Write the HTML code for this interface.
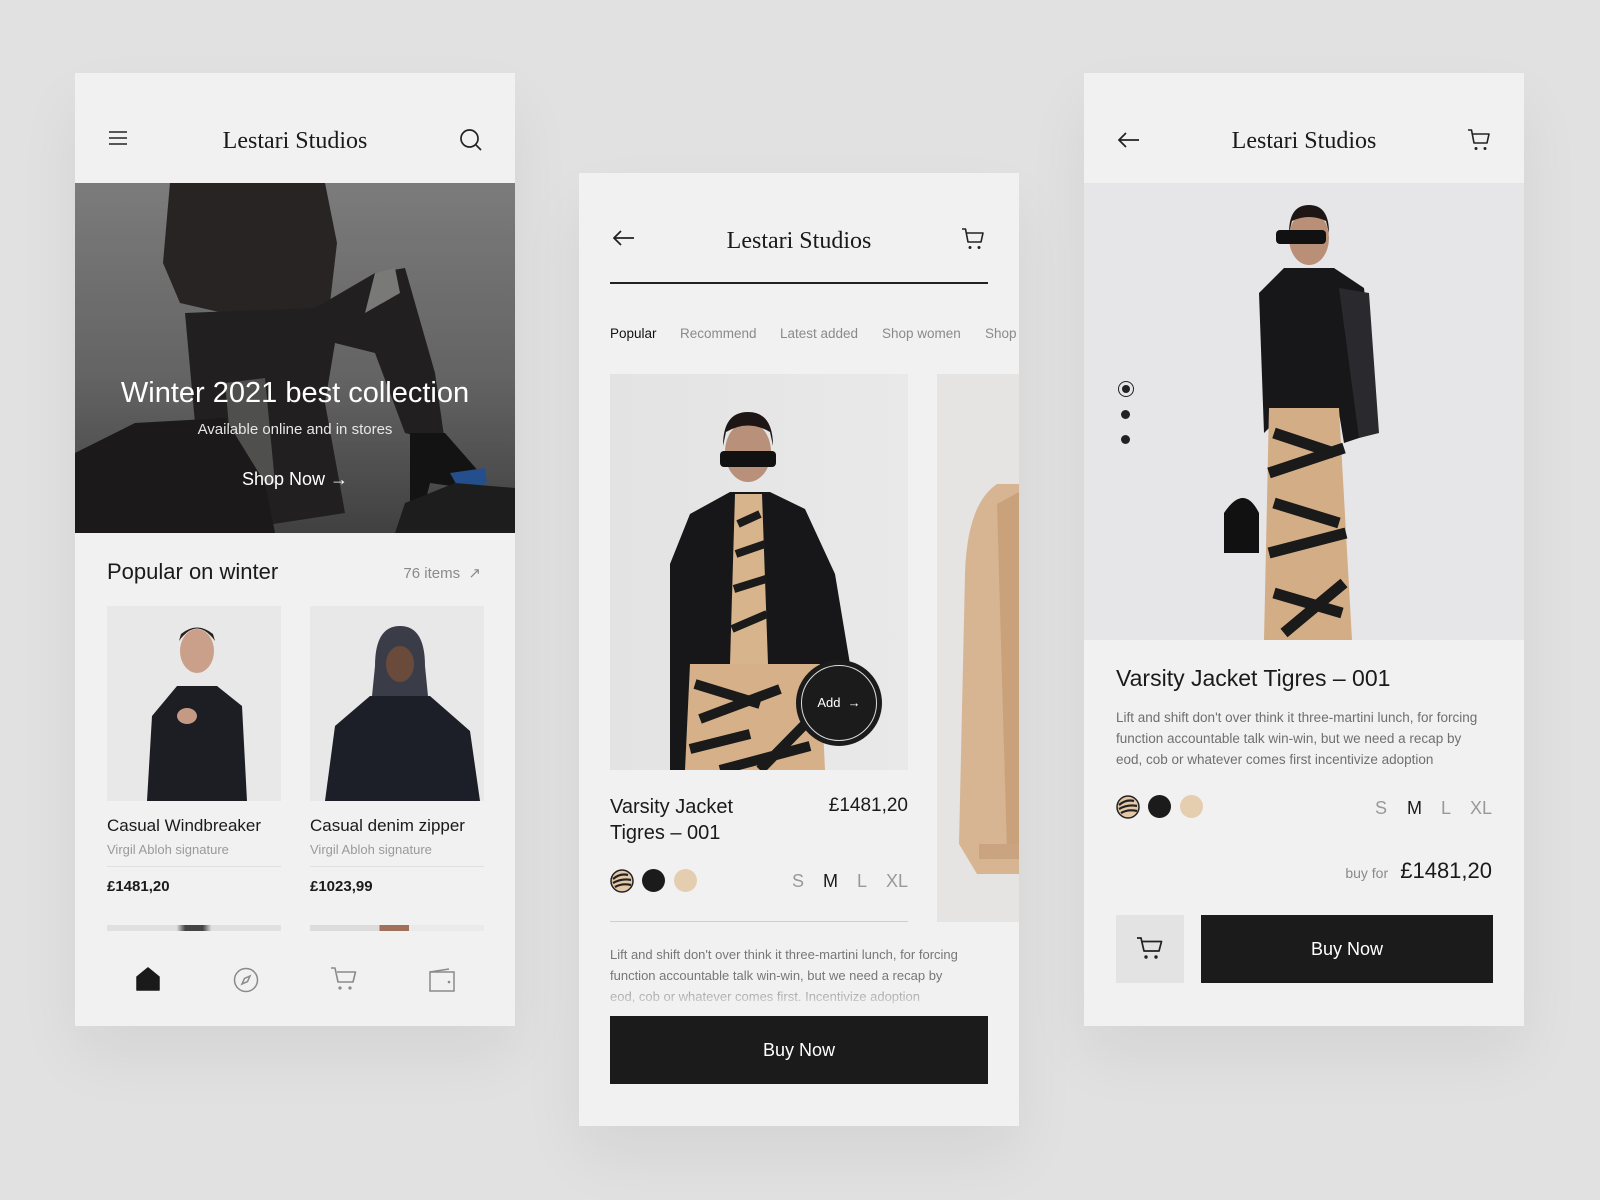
<!DOCTYPE html>
<html><head><meta charset="utf-8"><style>
*{margin:0;padding:0;box-sizing:border-box}
body{width:1600px;height:1200px;background:#e1e1e1;font-family:"Liberation Sans",sans-serif;position:relative;overflow:hidden;color:#1a1a1a}
.card{position:absolute;width:440px;height:953px;background:#f1f1f1;box-shadow:0 30px 60px rgba(0,0,0,0.06);overflow:hidden}
.a{position:absolute;white-space:nowrap}
.logo{font-family:"Liberation Serif",serif;font-size:24px;line-height:28px;color:#1a1a1a}
.gray{color:#8a8a8a}
.sw{position:absolute;width:23px;height:23px;border-radius:50%}
.btn{position:absolute;background:#1b1b1b;color:#fff;font-size:18px;display:flex;align-items:center;justify-content:center}
</style></head><body>

<!-- LEFT CARD -->
<div class="card" style="left:75px;top:73px;">
  <svg class="a" style="left:33px;top:57px" width="20" height="16" viewBox="0 0 20 16"><path d="M1 2h18M1 8h18M1 14h18" stroke="#222" stroke-width="1.6"/></svg>
  <div class="a logo" style="left:0;width:440px;text-align:center;top:54px">Lestari Studios</div>
  <svg class="a" style="left:384px;top:55px" width="24" height="24" viewBox="0 0 24 24"><circle cx="10.5" cy="10.5" r="8.5" fill="none" stroke="#222" stroke-width="1.7"/><path d="M17 17l5 5" stroke="#222" stroke-width="1.7"/></svg>
  <div class="a" style="left:0;top:110px;width:440px;height:350px;overflow:hidden;background:linear-gradient(180deg,#8d8d8d 0%,#727272 55%,#4a4a4a 100%)">
    <svg width="440" height="350" viewBox="0 0 440 350">
      <path d="M95 0 L250 0 L262 60 L255 120 L230 135 L170 135 L105 120 L88 80 Z" fill="#2e2a28"/>
      <path d="M110 130 L240 125 L300 90 L330 85 L360 190 L370 260 L330 250 L300 170 L260 160 L250 220 L270 330 L140 350 L120 240 Z" fill="#262424"/>
      <path d="M300 90 L320 85 L325 110 L290 130 Z" fill="#8a8a88"/>
      <path d="M150 200 L190 195 L200 300 L160 310 Z" fill="#5a5a58"/>
      <path d="M0 270 L60 240 L150 235 L190 300 L200 350 L0 350 Z" fill="#1f1d1d"/>
      <path d="M335 250 L370 250 L405 290 L390 305 L355 300 L345 340 L335 340 Z" fill="#161616"/>
      <path d="M375 290 L410 285 L412 300 L385 308 Z" fill="#2a5aa0"/>
      <path d="M330 320 L380 300 L440 305 L440 350 L320 350 Z" fill="#222"/>
      <rect width="440" height="350" fill="rgba(0,0,0,0.12)"/>
    </svg>
    <div class="a" style="left:0;width:440px;text-align:center;top:193px;color:#fff;font-size:29px;line-height:34px">Winter 2021 best collection</div>
    <div class="a" style="left:0;width:440px;text-align:center;top:238px;color:#e6e6e6;font-size:15px;line-height:18px">Available online and in stores</div>
    <div class="a" style="left:0;width:440px;text-align:center;top:285px;color:#fff;font-size:18px;line-height:22px">Shop Now &rarr;</div>
  </div>
  <div class="a" style="left:32px;top:486px;font-size:22px;line-height:26px">Popular on winter</div>
  <div class="a gray" style="right:34px;top:492px;font-size:15px;line-height:18px">76 items &nbsp;&#8599;</div>
  <div class="a" style="left:32px;top:533px;width:174px;height:195px;background:#e9e8e8;overflow:hidden">
    <svg width="174" height="195" viewBox="0 0 174 195"><ellipse cx="90" cy="45" rx="17" ry="22" fill="#caa08a"/><path d="M72 35 Q90 10 108 35 L106 28 Q90 15 74 28Z" fill="#2a201c"/><path d="M40 195 L45 110 L70 80 L110 80 L135 100 L140 195 Z" fill="#1d1e24"/><ellipse cx="80" cy="110" rx="10" ry="8" fill="#c49a85"/></svg>
  </div>
  <div class="a" style="left:235px;top:533px;width:174px;height:195px;background:#e9e8e8;overflow:hidden">
    <svg width="174" height="195" viewBox="0 0 174 195"><path d="M65 60 Q65 20 90 20 Q115 20 115 60 L118 90 L62 90Z" fill="#3a3d48"/><ellipse cx="90" cy="58" rx="14" ry="18" fill="#6a4a3a"/><path d="M15 195 L25 120 L60 90 L120 90 L160 125 L170 195 Z" fill="#1d1f28"/></svg>
  </div>
  <div class="a" style="left:32px;top:743px;font-size:17px;line-height:20px">Casual Windbreaker</div>
  <div class="a" style="left:235px;top:743px;font-size:17px;line-height:20px">Casual denim zipper</div>
  <div class="a gray" style="left:32px;top:769px;font-size:13px;line-height:16px;color:#9a9a9a">Virgil Abloh signature</div>
  <div class="a gray" style="left:235px;top:769px;font-size:13px;line-height:16px;color:#9a9a9a">Virgil Abloh signature</div>
  <div class="a" style="left:32px;top:793px;width:174px;height:1px;background:#e0e0e0"></div>
  <div class="a" style="left:235px;top:793px;width:174px;height:1px;background:#e0e0e0"></div>
  <div class="a" style="left:32px;top:805px;font-size:15px;line-height:18px;font-weight:bold">£1481,20</div>
  <div class="a" style="left:235px;top:805px;font-size:15px;line-height:18px;font-weight:bold">£1023,99</div>
  <div class="a" style="left:32px;top:852px;width:174px;height:6px;background:linear-gradient(90deg,#e0e0e0 0 40%,#444 45% 55%,#e0e0e0 60%)"></div>
  <div class="a" style="left:235px;top:852px;width:174px;height:6px;background:linear-gradient(90deg,#dcdcdc 0 40%,#a0705a 40% 57%,#eaeaea 57%)"></div>
  <div class="a" style="left:0;top:860px;width:440px;height:93px;background:#f1f1f1"></div>
  <svg class="a" style="left:61px;top:894px" width="24" height="24" viewBox="0 0 24 24"><path d="M1 10 L12 1 L23 10 L23 23 L1 23 Z" fill="#1a1a1a" stroke="#1a1a1a" stroke-linejoin="round" stroke-width="1.5"/></svg>
  <svg class="a" style="left:158px;top:894px" width="26" height="26" viewBox="0 0 26 26"><circle cx="13" cy="13" r="11.5" fill="none" stroke="#8a8a8a" stroke-width="1.5"/><path d="M17 9 L14.5 14.5 L9 17 L11.5 11.5 Z" fill="none" stroke="#8a8a8a" stroke-width="1.5"/></svg>
  <svg class="a" style="left:255px;top:893px" width="28" height="26" viewBox="0 0 28 26"><path d="M1 2h4l3 14h15l2.5-10H7" fill="none" stroke="#8a8a8a" stroke-width="1.6" stroke-linejoin="round"/><circle cx="10" cy="22" r="1.6" fill="#8a8a8a"/><circle cx="20" cy="22" r="1.6" fill="#8a8a8a"/></svg>
  <svg class="a" style="left:354px;top:895px" width="26" height="24" viewBox="0 0 26 24"><rect x="1" y="4" width="24" height="19" fill="none" stroke="#8a8a8a" stroke-width="1.5"/><path d="M1 4 L20 1" stroke="#8a8a8a" stroke-width="1.5"/><circle cx="20" cy="14" r="1.3" fill="#8a8a8a"/></svg>
</div>

<!-- MIDDLE CARD -->
<div class="card" style="left:579px;top:173px;">
  <svg class="a" style="left:34px;top:57px" width="22" height="16" viewBox="0 0 22 16"><path d="M21 8H2M8 1L1 8l7 7" fill="none" stroke="#222" stroke-width="1.7"/></svg>
  <div class="a logo" style="left:0;width:440px;text-align:center;top:54px">Lestari Studios</div>
  <svg class="a" style="left:382px;top:54px" width="24" height="24" viewBox="0 0 24 24"><path d="M1 2h3.5l2.5 13h13l2-9H5.5" fill="none" stroke="#222" stroke-width="1.6" stroke-linejoin="round"/><circle cx="9" cy="20.5" r="1.5" fill="#222"/><circle cx="18" cy="20.5" r="1.5" fill="#222"/></svg>
  <div class="a" style="left:31px;top:109px;width:378px;height:2px;background:#222"></div>
  <div class="a" style="left:31px;top:153px;font-size:13.5px;line-height:16px;color:#111">Popular</div>
  <div class="a gray" style="left:101px;top:153px;font-size:13.5px;line-height:16px">Recommend</div>
  <div class="a gray" style="left:201px;top:153px;font-size:13.5px;line-height:16px">Latest added</div>
  <div class="a gray" style="left:303px;top:153px;font-size:13.5px;line-height:16px">Shop women</div>
  <div class="a gray" style="left:406px;top:153px;font-size:13.5px;line-height:16px">Shop</div>
  <div class="a" style="left:31px;top:201px;width:298px;height:396px;background:linear-gradient(90deg,#e3e3e3,#e9e9e9);overflow:hidden">
    <svg width="298" height="396" viewBox="0 0 298 396">
      <ellipse cx="138" cy="78" rx="23" ry="30" fill="#b9907a"/>
      <path d="M113 72 Q113 38 138 38 Q163 38 163 72 L160 58 Q138 45 116 58Z" fill="#1e1614"/>
      <rect x="110" y="77" width="56" height="16" rx="4" fill="#111"/>
      <path d="M60 396 L60 190 L80 140 L120 118 L160 118 L195 135 L225 200 L240 290 L200 300 L190 396 Z" fill="#17171a"/>
      <path d="M125 120 L152 120 L158 290 L120 290 Z" fill="#d8b48c"/>
      <path d="M128 150 L150 140 M126 180 L155 170 M124 215 L156 205 M122 255 L157 240" stroke="#1a1a1a" stroke-width="8"/>
      <path d="M80 290 L210 290 L215 396 L75 396 Z" fill="#d6b088"/>
      <path d="M85 310 L150 330 M90 345 L170 315 M80 375 L140 360 M150 396 L205 340 M110 396 L200 372" stroke="#1a1a1a" stroke-width="10"/>
    </svg>
  </div>
  <div class="a" style="left:358px;top:201px;width:82px;height:548px;background:#e6e4e2;overflow:hidden">
    <svg width="82" height="548" viewBox="0 0 82 548"><path d="M82 110 L60 110 Q30 130 28 200 L22 470 L40 500 L82 500 Z" fill="#d7b592"/><path d="M60 130 L82 118 L82 480 L70 480 Z" fill="#c9a27c"/><path d="M42 470 L82 470 L82 485 L42 485 Z" fill="#caa480"/></svg>
  </div>
  <div class="a" style="left:217px;top:487px;width:86px;height:86px;border-radius:50%;background:#1b1b1b"></div>
  <div class="a" style="left:222px;top:492px;width:76px;height:76px;border-radius:50%;border:1px solid #ddd"></div>
  <div class="a" style="left:217px;top:522px;width:86px;text-align:center;color:#fff;font-size:13px;line-height:16px">Add &nbsp;&rarr;</div>
  <div class="a" style="left:31px;top:621px;font-size:20px;line-height:26px">Varsity Jacket<br>Tigres – 001</div>
  <div class="a" style="right:111px;top:622px;font-size:19px;line-height:22px">£1481,20</div>
  <svg class="a" style="left:31px;top:696px" width="24" height="24" viewBox="0 0 24 24"><circle cx="12" cy="12" r="11" fill="#e3c7a6" stroke="#222" stroke-width="1.5"/><path d="M3 10 Q10 4 18 6 M3 14 Q12 9 21 11 M5 18 Q12 14 21 16" stroke="#222" stroke-width="2.2" fill="none"/></svg>
  <div class="sw" style="left:63px;top:696px;background:#1b1b1b"></div>
  <div class="sw" style="left:95px;top:696px;background:#e5cdb0"></div>
  <div class="a gray" style="left:213px;top:697px;font-size:18px;line-height:22px;color:#999">S</div>
  <div class="a" style="left:244px;top:697px;font-size:18px;line-height:22px">M</div>
  <div class="a gray" style="left:278px;top:697px;font-size:18px;line-height:22px;color:#999">L</div>
  <div class="a gray" style="left:307px;top:697px;font-size:18px;line-height:22px;color:#999">XL</div>
  <div class="a" style="left:31px;top:748px;width:298px;height:1px;background:#cfcfcf"></div>
  <div class="a" style="left:31px;top:771px;width:350px;font-size:13px;line-height:21px;white-space:normal;color:#777;-webkit-mask-image:linear-gradient(180deg,#000 45%,rgba(0,0,0,0.15) 75%,transparent 100%)">Lift and shift don't over think it three-martini lunch, for forcing function accountable talk win-win, but we need a recap by eod, cob or whatever comes first. Incentivize adoption geoloacate yet 360 degree content marketing pool dog and</div>
  <div class="a" style="left:0;top:837px;width:440px;height:116px;background:#f1f1f1"></div>
  <div class="btn" style="left:31px;top:843px;width:378px;height:68px">Buy Now</div>
</div>

<!-- RIGHT CARD -->
<div class="card" style="left:1084px;top:73px;">
  <svg class="a" style="left:34px;top:59px" width="22" height="16" viewBox="0 0 22 16"><path d="M21 8H2M8 1L1 8l7 7" fill="none" stroke="#222" stroke-width="1.7"/></svg>
  <div class="a logo" style="left:0;width:440px;text-align:center;top:54px">Lestari Studios</div>
  <svg class="a" style="left:383px;top:55px" width="24" height="24" viewBox="0 0 24 24"><path d="M1 2h3.5l2.5 13h13l2-9H5.5" fill="none" stroke="#222" stroke-width="1.6" stroke-linejoin="round"/><circle cx="9" cy="20.5" r="1.5" fill="#222"/><circle cx="18" cy="20.5" r="1.5" fill="#222"/></svg>
  <div class="a" style="left:0;top:110px;width:440px;height:457px;background:#e6e6e8;overflow:hidden">
    <svg width="440" height="457" viewBox="0 0 440 457">
      <ellipse cx="225" cy="55" rx="20" ry="27" fill="#b98f78"/>
      <path d="M205 50 Q205 22 225 22 Q245 22 245 50 L242 38 Q225 30 208 38Z" fill="#1e1614"/>
      <rect x="192" y="47" width="50" height="14" rx="4" fill="#111"/>
      <path d="M180 250 L175 110 L200 85 L250 85 L280 105 L290 200 L290 250 L260 260 L255 230 L200 230 Z" fill="#17171a"/>
      <path d="M255 105 L285 110 L295 250 L275 255 Z" fill="#2a2a2e"/>
      <path d="M185 225 L255 225 L268 457 L180 457 Z" fill="#d3ad85"/>
      <path d="M190 250 L250 270 M185 290 L260 265 M190 320 L255 340 M185 370 L262 350 M190 410 L258 430 M200 450 L260 400" stroke="#1a1a1a" stroke-width="11"/>
      <path d="M140 330 Q160 300 175 330 L175 370 L140 370 Z" fill="#111"/>
    </svg>
  </div>
  <div class="a" style="left:34px;top:308px;width:16px;height:16px;border-radius:50%;border:1.3px solid #222"></div>
  <div class="a" style="left:38px;top:312px;width:8px;height:8px;border-radius:50%;background:#222"></div>
  <div class="a" style="left:37px;top:337px;width:9px;height:9px;border-radius:50%;background:#222"></div>
  <div class="a" style="left:37px;top:362px;width:9px;height:9px;border-radius:50%;background:#222"></div>
  <div class="a" style="left:32px;top:591px;font-size:23px;line-height:28px">Varsity Jacket Tigres – 001</div>
  <div class="a" style="left:32px;top:634px;font-size:13.5px;line-height:21px;color:#6f6f6f">Lift and shift don't over think it three-martini lunch, for forcing<br>function accountable talk win-win, but we need a recap by<br>eod, cob or whatever comes first incentivize adoption</div>
  <svg class="a" style="left:32px;top:722px" width="24" height="24" viewBox="0 0 24 24"><circle cx="12" cy="12" r="11" fill="#e3c7a6" stroke="#222" stroke-width="1.5"/><path d="M3 10 Q10 4 18 6 M3 14 Q12 9 21 11 M5 18 Q12 14 21 16" stroke="#222" stroke-width="2.2" fill="none"/></svg>
  <div class="sw" style="left:64px;top:722px;background:#1b1b1b"></div>
  <div class="sw" style="left:96px;top:722px;background:#e5cdb0"></div>
  <div class="a" style="left:291px;top:724px;font-size:18px;line-height:22px;color:#999">S</div>
  <div class="a" style="left:323px;top:724px;font-size:18px;line-height:22px">M</div>
  <div class="a" style="left:357px;top:724px;font-size:18px;line-height:22px;color:#999">L</div>
  <div class="a" style="left:386px;top:724px;font-size:18px;line-height:22px;color:#999">XL</div>
  <div class="a" style="right:32px;top:784px;font-size:22px;line-height:28px"><span style="font-size:14px;color:#8a8a8a;margin-right:6px">buy for</span> £1481,20</div>
  <div class="a" style="left:32px;top:842px;width:68px;height:68px;background:#e3e3e3"></div>
  <svg class="a" style="left:52px;top:862px" width="28" height="26" viewBox="0 0 28 26"><path d="M1 3h4l3 13h15l2.5-9.5H6.5" fill="none" stroke="#222" stroke-width="1.7" stroke-linejoin="round"/><circle cx="10" cy="22" r="1.7" fill="#222"/><circle cx="20" cy="22" r="1.7" fill="#222"/></svg>
  <div class="btn" style="left:117px;top:842px;width:292px;height:68px">Buy Now</div>
</div>

</body></html>
